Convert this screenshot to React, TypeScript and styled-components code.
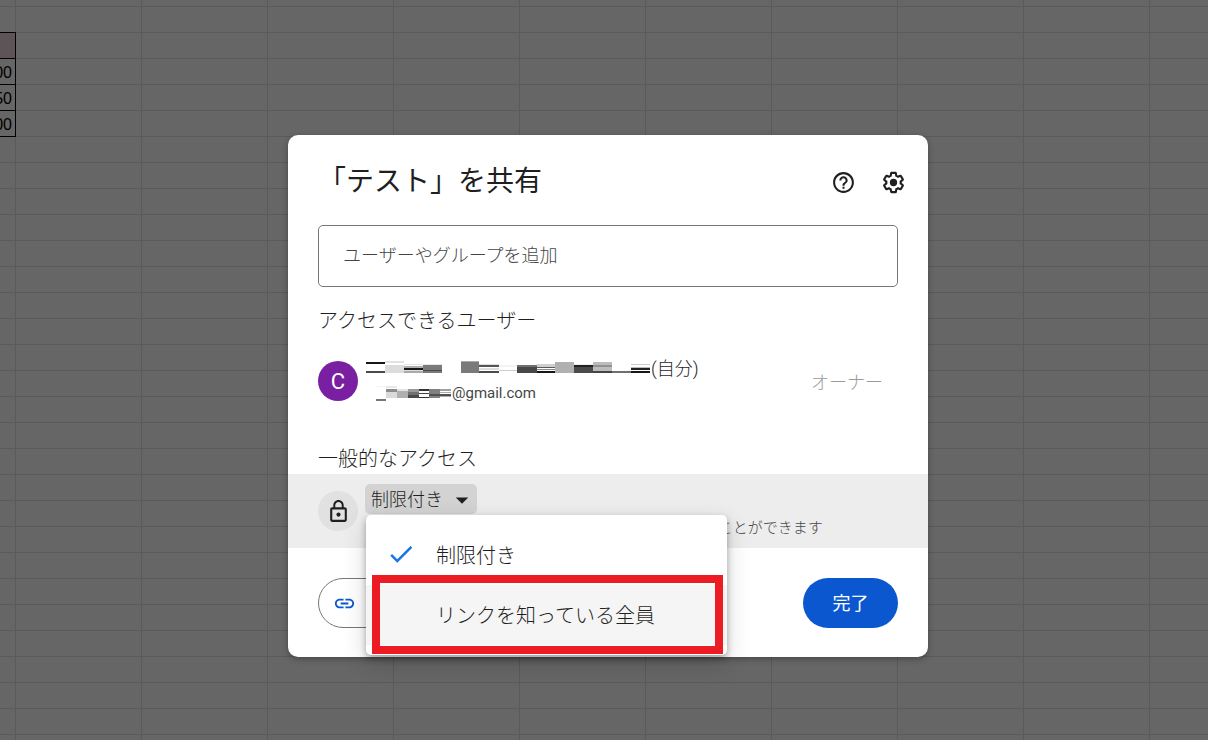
import React from "react";
import styled, { createGlobalStyle, css } from "styled-components";
import { MdArrowDropDown, MdCheck, MdHelpOutline, MdLink, MdLockOutline } from "react-icons/md";

const GlobalStyle = createGlobalStyle`
  *, *::before, *::after { box-sizing: border-box; }
  body {
    margin: 0;
    color: #1f1f1f;
    font-family: Roboto, "Noto Sans CJK JP", sans-serif;
    font-weight: 300;
  }
`;

const Page = styled.div`
  position: relative;
  min-height: 100vh;
  overflow: hidden;
`;

const Sheet = styled.div`
  position: absolute;
  inset: 0;
  padding-top: 32px;
  background-color: #fff;
  background-image:
    linear-gradient(to right, #e0e0e0 1px, transparent 1px),
    linear-gradient(to bottom, #e0e0e0 1px, transparent 1px);
  background-size: 126px 26px;
  background-position: 15px 6px;
`;

const SheetEdge = styled.div`
  display: flex;
  justify-content: flex-end;
  width: 16px;
  overflow: hidden;
`;

const DataTable = styled.table`
  flex: none;
  width: 127px;
  border-collapse: separate;
  border-spacing: 0;
  border-top: 1px solid #000;
  font: 400 16px/23px "Liberation Sans", Arial, sans-serif;
  color: #000;
`;

const cell = css`
  height: 26px;
  padding: 2px 3px 0 0;
  border-right: 1px solid #000;
  border-bottom: 1px solid #000;
  text-align: right;
`;

const HeadCell = styled.th`
  ${cell}
  background: #ead1dc;
`;

const Cell = styled.td`
  ${cell}
`;

const Overlay = styled.div`
  position: relative;
  display: flex;
  justify-content: center;
  align-items: flex-start;
  min-height: 100vh;
  padding: 135px 0 83px 8px;
  background: rgba(0, 0, 0, 0.6);
`;

const Dialog = styled.section`
  width: 100%;
  max-width: 640px;
  border-radius: 10px;
  background: #fff;
  box-shadow: 0 2px 6px rgba(0, 0, 0, 0.3);
`;

const Header = styled.header`
  display: flex;
  align-items: center;
  padding: 22px 10px 0 30px;
`;

const Title = styled.h1`
  flex: 1;
  margin: 0;
  font-size: 28px;
  font-weight: 400;
  line-height: 50px;
`;

const IconButton = styled.button`
  display: grid;
  place-items: center;
  width: 50px;
  height: 50px;
  padding: 0;
  border: 0;
  background: none;
  color: #1f1f1f;
`;

const Field = styled.div`
  padding: 18px 30px 0;
`;

const AddInput = styled.input`
  display: block;
  width: 100%;
  height: 62px;
  padding: 0 24px 2px;
  border: 1px solid #747775;
  border-radius: 5px;
  background: #fff;
  font: inherit;
  font-size: 18px;
  color: #1f1f1f;
  &::placeholder {
    color: #444746;
    opacity: 1;
  }
`;

const SectionTitle = styled.h2`
  margin: 0;
  padding: 0 30px;
  font-size: 20px;
  font-weight: 300;
  line-height: 30px;
`;

const People = styled.div`
  padding: 19px 0 38px;
`;

const Person = styled.div`
  display: flex;
  align-items: center;
  gap: 8px;
  height: 50px;
  margin: 20px 0 0;
  padding: 0 45px 0 30px;
`;

const Avatar = styled.div<{ $color: string }>`
  display: grid;
  place-items: center;
  flex: none;
  width: 40px;
  height: 40px;
  border-radius: 50%;
  background: ${(p) => p.$color};
  color: #fff;
  font-size: 22px;
  font-weight: 400;
`;

const Identity = styled.div`
  flex: 1;
`;

const NameLine = styled.div`
  display: flex;
  align-items: center;
  font-size: 18px;
  line-height: 24px;
`;

const MailLine = styled.div`
  display: flex;
  align-items: center;
  padding-left: 10px;
  font-size: 15px;
  font-weight: 400;
  line-height: 24px;
  color: #444746;
`;

const Role = styled.span`
  font-size: 18px;
  color: #9a9b9b;
`;

const AccessRow = styled.div`
  display: flex;
  align-items: center;
  gap: 7px;
  height: 74px;
  padding: 0 30px;
  background: #ededed;
`;

const LockBadge = styled(Avatar)`
  color: #1f1f1f;
`;

const AccessBody = styled.div`
  flex: 1;
  height: 54px;
`;

const Picker = styled.div`
  position: relative;
  width: 112px;
`;

const PickerSelect = styled.select`
  display: block;
  width: 100%;
  height: 30px;
  padding: 0 32px 0 6px;
  border: 0;
  border-radius: 5px;
  appearance: none;
  background: #d3d3d3;
  color: #1f1f1f;
  font: inherit;
  font-size: 18px;
`;

const PickerArrow = styled(MdArrowDropDown)`
  position: absolute;
  top: 1px;
  right: 0;
  pointer-events: none;
`;

const AccessNote = styled.p`
  margin: 0;
  padding-left: 9px;
  font-size: 15px;
  line-height: 28px;
  white-space: nowrap;
  color: #444746;
`;

const Menu = styled.ul`
  position: absolute;
  z-index: 1;
  top: 31px;
  left: 1px;
  width: 361px;
  margin: 0;
  padding: 10px 0;
  border-radius: 5px;
  background: #fff;
  box-shadow: 0 3px 6px rgba(0, 0, 0, 0.3), 0 8px 24px rgba(0, 0, 0, 0.16);
  list-style: none;
`;

const MenuItem = styled.button<{ $active?: boolean }>`
  display: flex;
  align-items: center;
  gap: 20px;
  width: 100%;
  height: 60px;
  padding: 0 20px 2px;
  border: 0;
  background: ${(p) => (p.$active ? "#f5f5f5" : "#fff")};
  color: #1f1f1f;
  font: inherit;
  font-size: 20px;
  text-align: left;
`;

const CheckSlot = styled.span`
  display: flex;
  width: 30px;
  color: #1a73e8;
`;

const Highlight = styled.div`
  position: absolute;
  top: 60px;
  left: 6px;
  right: 4px;
  bottom: 1px;
  border: 8px solid #ed1c24;
  pointer-events: none;
`;

const Footer = styled.footer`
  display: flex;
  justify-content: space-between;
  padding: 30px 30px 29px;
`;

const PillButton = styled.button`
  display: flex;
  align-items: center;
  justify-content: center;
  height: 50px;
  border-radius: 25px;
  font: inherit;
  font-size: 18px;
  font-weight: 400;
`;

const LinkButton = styled(PillButton)`
  justify-content: flex-start;
  width: 190px;
  padding: 0 14px;
  border: 1px solid #747775;
  background: #fff;
  color: #0b57d0;
`;

const DoneButton = styled(PillButton)`
  min-width: 95px;
  padding: 0 28px 2px;
  border: 0;
  background: #0b57d0;
  color: #fff;
`;

/* Each strip is [x, y, width, height, colour]. */
type Strip = [number, number, number, number, string];

const nameStrips: Strip[] = [
  [0, 1, 19, 2, "#161616"], [0, 10, 19, 2, "#4a4a4a"],
  [19, 0, 19, 2, "#e2e2e2"], [19, 4, 19, 8, "#dcdcdc"],
  [38, 3, 19, 1, "#e6e6e6"], [38, 5, 19, 2, "#b0b0b0"], [38, 7, 19, 2, "#161616"], [38, 9, 19, 1, "#dcdcdc"], [38, 10, 19, 2, "#aaaaaa"],
  [57, 3, 19, 1, "#e6e6e6"], [57, 4, 19, 8, "#7a7a7a"], [57, 9, 19, 1, "#4a4a4a"],
  [95, 0, 18, 12, "#7a7a7a"], [95, 0, 18, 1, "#aaaaaa"],
  [113, 3, 20, 1, "#dcdcdc"], [113, 4, 20, 2, "#555555"], [113, 7, 20, 2, "#dddddd"], [113, 10, 20, 2, "#4a4a4a"],
  [133, 4, 18, 2, "#f3f3f3"], [133, 9, 18, 1, "#cccccc"],
  [151, 4, 20, 2, "#707070"], [151, 6, 20, 6, "#484848"],
  [171, 3, 18, 3, "#d0d0d0"], [171, 6, 18, 1, "#5a5a5a"], [171, 8, 18, 1, "#8a8a8a"], [171, 10, 18, 2, "#161616"],
  [189, 1, 19, 11, "#b0b0b0"],
  [208, 3, 19, 1, "#eeeeee"], [208, 4, 19, 2, "#222222"], [208, 6, 19, 6, "#4a4a4a"],
  [227, 1, 19, 9, "#bcbcbc"], [227, 4, 19, 2, "#929292"], [227, 10, 19, 2, "#444444"],
  [246, 10, 19, 2, "#707070"],
  [265, 3, 19, 1, "#cccccc"], [265, 6, 19, 1, "#bbbbbb"], [265, 7, 19, 2, "#222222"], [265, 10, 19, 2, "#161616"],
];

const mailStrips: Strip[] = [
  [0, 0, 10, 1, "#f4f4f4"], [0, 13, 10, 2, "#777777"],
  [10, 0, 11, 2, "#e8e8e8"], [10, 3, 11, 3, "#8c8c8c"], [10, 6, 11, 6, "#dadada"],
  [21, 3, 11, 2, "#e2e2e2"], [21, 5, 11, 7, "#b0b0b0"],
  [32, 3, 11, 3, "#999999"], [32, 6, 11, 3, "#707070"], [32, 9, 11, 3, "#4a4a4a"],
  [43, 3, 10, 2, "#333333"], [43, 7, 10, 1, "#444444"], [43, 11, 10, 1, "#333333"],
  [53, 3, 11, 9, "#808080"], [53, 8, 11, 2, "#505050"],
  [64, 3, 11, 2, "#a0a0a0"], [64, 6, 11, 1, "#aaaaaa"], [64, 8, 11, 2, "#505050"], [64, 10, 11, 1, "#aaaaaa"],
];

function Mosaic({ strips, width, height }: { strips: Strip[]; width: number; height: number }) {
  return (
    <svg width={width} height={height} shapeRendering="crispEdges" aria-hidden="true">
      {strips.map(([x, y, w, h, fill], i) => (
        <rect key={i} x={x} y={y} width={w} height={h} fill={fill} />
      ))}
    </svg>
  );
}

function SettingsIcon() {
  return (
    <svg width="25" height="25" viewBox="0 0 24 24" fill="currentColor" aria-hidden="true">
      <path d="M13.85 22.25h-3.7c-.74 0-1.36-.54-1.45-1.27l-.27-1.89c-.27-.14-.53-.29-.79-.46l-1.8.72c-.7.26-1.47-.03-1.81-.65L2.2 15.53c-.35-.66-.2-1.44.36-1.88l1.53-1.19c-.01-.15-.02-.3-.02-.46 0-.15.01-.31.02-.46l-1.52-1.19c-.59-.45-.74-1.26-.37-1.88l1.85-3.19c.34-.62 1.11-.9 1.79-.63l1.81.73c.26-.17.52-.32.78-.46l.27-1.91c.09-.7.71-1.25 1.44-1.25h3.7c.74 0 1.36.54 1.45 1.27l.27 1.89c.27.14.53.29.79.46l1.8-.72c.71-.26 1.48.03 1.82.65l1.84 3.18c.36.66.2 1.44-.36 1.88l-1.52 1.19c.01.15.02.3.02.46s-.01.31-.02.46l1.52 1.19c.56.45.72 1.23.37 1.86l-1.86 3.22c-.34.62-1.11.9-1.8.63l-1.8-.72c-.26.17-.52.32-.78.46l-.27 1.91c-.1.68-.72 1.22-1.46 1.22zm-3.23-2h2.76l.37-2.55.53-.22c.44-.18.88-.44 1.34-.78l.45-.34 2.38.96 1.38-2.4-2.03-1.58.07-.56c.03-.26.06-.51.06-.78s-.03-.53-.06-.78l-.07-.56 2.03-1.58-1.39-2.4-2.39.96-.45-.35c-.42-.32-.87-.58-1.33-.77l-.52-.22-.37-2.55h-2.76l-.37 2.55-.53.21c-.44.19-.88.44-1.34.79l-.45.33-2.38-.95-1.39 2.39 2.03 1.58-.07.56a7 7 0 0 0-.06.79c0 .26.02.53.06.78l.07.56-2.03 1.58 1.38 2.4 2.39-.96.45.35c.43.33.86.58 1.33.77l.53.22.38 2.55z" />
      <circle cx="12" cy="12" r="3.5" />
    </svg>
  );
}

export default function App() {
  return (
    <>
      <GlobalStyle />
      <Page lang="ja">
        <Sheet>
          <SheetEdge>
            <DataTable>
              <thead>
                <tr><HeadCell scope="col" /></tr>
              </thead>
              <tbody>
                <tr><Cell>00</Cell></tr>
                <tr><Cell>50</Cell></tr>
                <tr><Cell>00</Cell></tr>
              </tbody>
            </DataTable>
          </SheetEdge>
        </Sheet>
        <Overlay>
          <Dialog role="dialog" aria-modal="true" aria-labelledby="share-title">
            <Header>
              <Title id="share-title">「テスト」を共有</Title>
              <IconButton type="button" aria-label="ヘルプ"><MdHelpOutline size={25} /></IconButton>
              <IconButton type="button" aria-label="設定"><SettingsIcon /></IconButton>
            </Header>
            <Field>
              <AddInput type="text" aria-label="ユーザーやグループを追加" placeholder="ユーザーやグループを追加" />
            </Field>
            <People>
              <SectionTitle>アクセスできるユーザー</SectionTitle>
              <Person>
                <Avatar $color="#7b1fa2">C</Avatar>
                <Identity>
                  <NameLine><Mosaic strips={nameStrips} width={285} height={17} />(自分)</NameLine>
                  <MailLine><Mosaic strips={mailStrips} width={76} height={15} />@gmail.com</MailLine>
                </Identity>
                <Role>オーナー</Role>
              </Person>
            </People>
            <SectionTitle>一般的なアクセス</SectionTitle>
            <AccessRow>
              <LockBadge $color="#e1e1e1"><MdLockOutline size={25} /></LockBadge>
              <AccessBody>
                <Picker>
                  <PickerSelect aria-label="一般的なアクセス" defaultValue="restricted">
                    <option value="restricted">制限付き</option>
                    <option value="link">リンクを知っている全員</option>
                  </PickerSelect>
                  <PickerArrow size={30} />
                  <Menu>
                    <li>
                      <MenuItem type="button"><CheckSlot><MdCheck size={30} /></CheckSlot>制限付き</MenuItem>
                    </li>
                    <li>
                      <MenuItem type="button" $active><CheckSlot />リンクを知っている全員</MenuItem>
                    </li>
                    <Highlight as="li" aria-hidden="true" />
                  </Menu>
                </Picker>
                <AccessNote>アクセス権のあるユーザーのみが、リンクから開くことができます</AccessNote>
              </AccessBody>
            </AccessRow>
            <Footer>
              <LinkButton type="button" aria-label="リンクをコピー"><MdLink size={23} /></LinkButton>
              <DoneButton type="button">完了</DoneButton>
            </Footer>
          </Dialog>
        </Overlay>
      </Page>
    </>
  );
}
